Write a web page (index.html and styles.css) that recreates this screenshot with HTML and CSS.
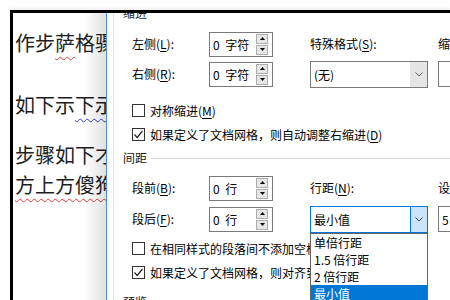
FILE: index.html
```html
<!DOCTYPE html>
<html lang="zh-CN">
<head>
<meta charset="utf-8">
<link rel="stylesheet" href="styles.css">
</head>
<body>
<div class="frame">
  <div class="doc">
    <p class="p1">作步<span class="wave-red">萨</span>格骤</p>
    <p class="p2">如下示<span class="wave-blue">下示</span></p>
    <p class="p3">步骤如下才</p>
    <p class="p4"><span class="wave-red">方上方傻狗</span></p>
  </div>
  <div class="divider"></div>
  <div class="dialog">
    <div class="dlg-body">
      <div class="head">缩进</div>
      <div class="fields">
        <div class="lbl">左侧(<u>L</u>):</div>
        <div class="spin"><span class="sv">0 字符</span><span class="btns"><span class="b"><svg width="5" height="3" viewBox="0 0 5 3"><polygon points="0,3 2.5,0 5,3" fill="#000"/></svg></span><span class="b"><svg width="5" height="3" viewBox="0 0 5 3"><polygon points="0,0 5,0 2.5,3" fill="#000"/></svg></span></span></div>
        <div class="lbl">特殊格式(<u>S</u>):</div>
        <div class="lbl">缩进值(<u>Y</u>):</div>

        <div class="lbl">右侧(<u>R</u>):</div>
        <div class="spin"><span class="sv">0 字符</span><span class="btns"><span class="b"><svg width="5" height="3" viewBox="0 0 5 3"><polygon points="0,3 2.5,0 5,3" fill="#000"/></svg></span><span class="b"><svg width="5" height="3" viewBox="0 0 5 3"><polygon points="0,0 5,0 2.5,3" fill="#000"/></svg></span></span></div>
        <div class="select"><span class="val">(无)</span><span class="arrow"><svg width="8" height="5" viewBox="0 0 8 5"><polyline points="0.5,0.5 4,4 7.5,0.5" fill="none" stroke="#606060" stroke-width="1"/></svg></span></div>
        <div class="input"></div>
      </div>
      <div class="checks c1">
        <div class="chk"><span class="box"></span><span>对称缩进(<u>M</u>)</span></div>
        <div class="chk"><span class="box"><svg width="11" height="11" viewBox="0 0 11 11"><polyline points="1.5,5.5 4.2,8.5 9.5,2" fill="none" stroke="#222" stroke-width="1.2"/></svg></span><span>如果定义了文档网格，则自动调整右缩进(<u>D</u>)</span></div>
      </div>
      <div class="head line">间距</div>
      <div class="fields f2">
        <div class="lbl">段前(<u>B</u>):</div>
        <div class="spin"><span class="sv">0 行</span><span class="btns"><span class="b"><svg width="5" height="3" viewBox="0 0 5 3"><polygon points="0,3 2.5,0 5,3" fill="#000"/></svg></span><span class="b"><svg width="5" height="3" viewBox="0 0 5 3"><polygon points="0,0 5,0 2.5,3" fill="#000"/></svg></span></span></div>
        <div class="lbl">行距(<u>N</u>):</div>
        <div class="lbl">设置值(<u>A</u>):</div>

        <div class="lbl">段后(<u>F</u>):</div>
        <div class="spin"><span class="sv">0 行</span><span class="btns"><span class="b"><svg width="5" height="3" viewBox="0 0 5 3"><polygon points="0,3 2.5,0 5,3" fill="#000"/></svg></span><span class="b"><svg width="5" height="3" viewBox="0 0 5 3"><polygon points="0,0 5,0 2.5,3" fill="#000"/></svg></span></span></div>
        <div class="select focus"><span class="val">最小值</span><span class="arrow"><svg width="8" height="5" viewBox="0 0 8 5"><polyline points="0.5,0.5 4,4 7.5,0.5" fill="none" stroke="#404040" stroke-width="1"/></svg></span>
          <ul class="list">
            <li>单倍行距</li>
            <li>1.5 倍行距</li>
            <li>2 倍行距</li>
            <li class="sel">最小值</li>
          </ul>
        </div>
        <div class="input"><span>5</span></div>
      </div>
      <div class="checks c2">
        <div class="chk"><span class="box"></span><span>在相同样式的段落间不添加空格(<u>C</u>)</span></div>
        <div class="chk"><span class="box"><svg width="11" height="11" viewBox="0 0 11 11"><polyline points="1.5,5.5 4.2,8.5 9.5,2" fill="none" stroke="#222" stroke-width="1.2"/></svg></span><span>如果定义了文档网格，则对齐到网格(<u>W</u>)</span></div>
      </div>
      <div class="head line pv">预览</div>
    </div>
  </div>
</div>
</body>
</html>
```

FILE: styles.css
```css
* { box-sizing: border-box; }
html, body { margin: 0; padding: 0; background: #fff; }
body {
  width: 450px;
  height: 300px;
  overflow: hidden;
  font-family: "Noto Sans CJK SC", "Noto Sans", sans-serif;
}
.frame {
  margin: 10px 0 0 10px;
  height: 290px;
  border-top: 3px solid #000;
  border-left: 3px solid #000;
  display: flex;
  overflow: hidden;
  box-shadow: 0 -2px 2px rgba(0,0,0,0.06);
}
.doc {
  width: 93px;
  flex: none;
  position: relative;
  overflow: hidden;
  white-space: nowrap;
  font-size: 20px;
  line-height: 30px;
  color: #1e1e1e;
  padding-left: 2px;
}
.doc::after {
  content: "";
  position: absolute;
  top: 0; bottom: 0; right: 0;
  width: 22px;
  background: linear-gradient(to right, rgba(0,0,0,0), rgba(0,0,0,0.12));
}
.doc p { margin: 0; }
.doc .p1 { margin-top: 15px; }
.doc .p2 { margin-top: 32px; }
.doc .p3 { margin-top: 20px; }
.wave-red {
  text-decoration: underline wavy #e23b3b;
  text-decoration-thickness: 1px;
  text-underline-offset: 5px;
}
.wave-blue {
  text-decoration: underline wavy #3a3ad0;
  text-decoration-thickness: 1px;
  text-underline-offset: 5px;
}
.divider { width: 1px; flex: none; background: #4d8fd6; }
.dialog {
  flex: 1;
  min-width: 0;
  padding-left: 6px;
  overflow: hidden;
  background: #fff;
}
.dlg-body {
  border-left: 1px solid #e6e6e6;
  padding-left: 9px;
  margin-top: -8px;
  font-size: 12px;
  color: #000;
  white-space: nowrap;
  height: 320px;
}
.dlg-body u { text-underline-offset: 2px; }
.head {
  height: 16px;
  line-height: 16px;
  display: flex;
  align-items: center;
  color: #1a1a1a;
}
.head.line::after {
  content: "";
  flex: 1;
  height: 1px;
  margin-left: 4px;
  background: #d9d9d9;
}
.fields {
  display: grid;
  grid-template-columns: 77px 101px 128px minmax(0, 1fr);
  grid-template-rows: 26px 26px;
  row-gap: 4px;
  align-items: center;
  margin: 10px 0 0 9px;
}
.fields.f2 { margin-top: 9px; row-gap: 5px; }
.lbl { line-height: 16px; }
.spin {
  width: 64px;
  height: 25px;
  border: 1px solid #7a7a7a;
  display: flex;
  align-items: center;
  justify-content: space-between;
  padding: 0 4px 0 3px;
  background: #fff;
}
.sv { word-spacing: 3px; }
.btns { display: flex; flex-direction: column; gap: 1px; }
.btns .b {
  width: 12px;
  height: 10px;
  border: 1px solid #adadad;
  background: #e6e6e6;
  display: flex;
  align-items: center;
  justify-content: center;
}
.select {
  position: relative;
  width: 118px;
  height: 27px;
  border: 1px solid #7a7a7a;
  display: flex;
  align-items: center;
  background: #fff;
}
.select .val { flex: 1; padding-left: 3px; }
.select .arrow {
  width: 17px;
  align-self: stretch;
  background: #e5e5e5;
  display: flex;
  align-items: center;
  justify-content: center;
}
.select.focus { border-color: #0078d7; }
.select.focus .arrow { background: #cce4f7; border-left: 1px solid #0078d7; }
.input {
  width: 60px;
  height: 26px;
  border: 1px solid #7a7a7a;
  display: flex;
  align-items: center;
  padding-left: 3px;
  background: #fff;
}
.list {
  position: absolute;
  top: calc(100% + 1px);
  left: -1px;
  width: 118px;
  margin: 0;
  padding: 0;
  list-style: none;
  border: 1px solid #646464;
  background: #fff;
  z-index: 2;
}
.list li {
  height: 17px;
  line-height: 17px;
  padding-left: 3px;
}
.list li.sel { background: #0078d7; color: #fff; }
.checks { margin-left: 9px; }
.checks.c1 { margin-top: 11px; }
.checks.c2 { margin-top: 4px; }
.chk {
  height: 24px;
  display: flex;
  align-items: center;
  gap: 5px;
}
.box {
  width: 13px;
  height: 13px;
  flex: none;
  border: 1px solid #333;
  background: #fff;
  display: flex;
  align-items: center;
  justify-content: center;
}
.head.line:not(.pv) { margin-top: 4px; }
.head.pv { margin-top: 10px; }
```
